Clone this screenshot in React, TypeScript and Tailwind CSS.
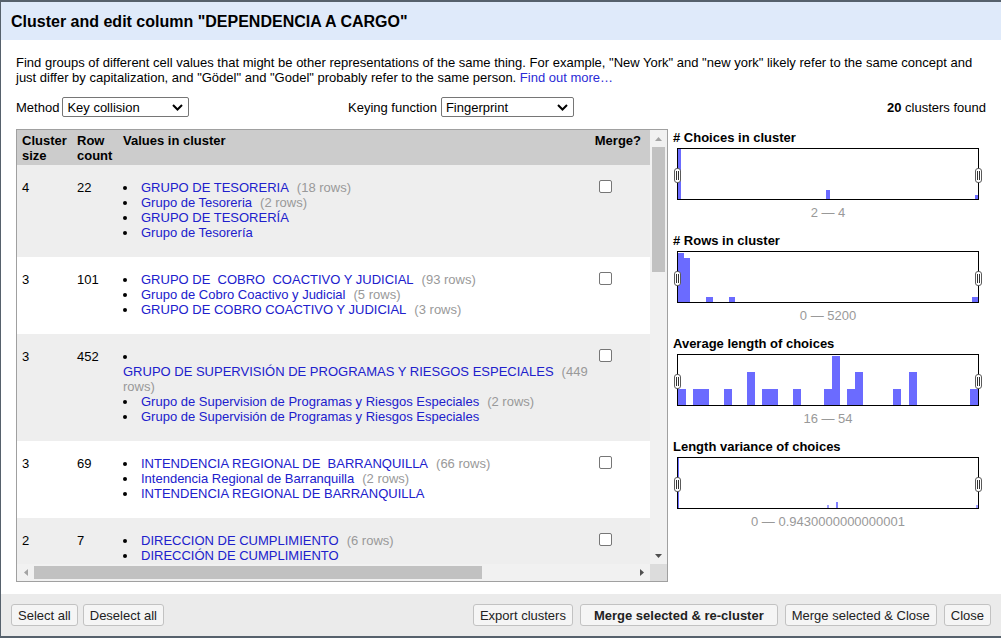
import React from "react";

type Value = { text: string; rows?: string };
type Cluster = { size: number; count: number; values: Value[]; wrapFirst?: boolean };

const clusters: Cluster[] = [
	{
		size: 4,
		count: 22,
		values: [
			{ text: "GRUPO DE TESORERIA", rows: "18" },
			{ text: "Grupo de Tesoreria", rows: "2" },
			{ text: "GRUPO DE TESORERÍA" },
			{ text: "Grupo de Tesorería" },
		],
	},
	{
		size: 3,
		count: 101,
		values: [
			{ text: "GRUPO DE  COBRO  COACTIVO Y JUDICIAL", rows: "93" },
			{ text: "Grupo de Cobro Coactivo y Judicial", rows: "5" },
			{ text: "GRUPO DE COBRO COACTIVO Y JUDICIAL", rows: "3" },
		],
	},
	{
		size: 3,
		count: 452,
		wrapFirst: true,
		values: [
			{ text: "GRUPO DE SUPERVISIÓN DE PROGRAMAS Y RIESGOS ESPECIALES", rows: "449" },
			{ text: "Grupo de Supervision de Programas y Riesgos Especiales", rows: "2" },
			{ text: "Grupo de Supervisión de Programas y Riesgos Especiales" },
		],
	},
	{
		size: 3,
		count: 69,
		values: [
			{ text: "INTENDENCIA REGIONAL DE  BARRANQUILLA", rows: "66" },
			{ text: "Intendencia Regional de Barranquilla", rows: "2" },
			{ text: "INTENDENCIA REGIONAL DE BARRANQUILLA" },
		],
	},
	{
		size: 2,
		count: 7,
		values: [
			{ text: "DIRECCION DE CUMPLIMIENTO", rows: "6" },
			{ text: "DIRECCIÓN DE CUMPLIMIENTO" },
		],
	},
];

type Bar = [number, number, number, number, string?];

const charts: { title: string; range: string; bars: Bar[] }[] = [
	{
		title: "# Choices in cluster",
		range: "2 — 4",
		bars: [
			[0, 0, 3, 50],
			[148, 41, 4, 9],
			[297, 46, 3, 4],
		],
	},
	{
		title: "# Rows in cluster",
		range: "0 — 5200",
		bars: [
			[0, 1, 6, 49],
			[6, 6, 6, 44],
			[28, 45, 7, 5],
			[51, 45, 6, 5],
			[294, 45, 6, 5],
		],
	},
	{
		title: "Average length of choices",
		range: "16 — 54",
		bars: [
			[0, 34, 8, 16],
			[15, 34, 16, 16],
			[46, 34, 8, 16],
			[69, 17, 8, 33],
			[84, 34, 16, 16],
			[115, 34, 8, 16],
			[146, 34, 8, 16],
			[154, 1, 8, 49],
			[169, 34, 8, 16],
			[177, 17, 8, 33],
			[215, 34, 8, 16],
			[231, 17, 8, 33],
			[292, 34, 8, 16],
		],
	},
	{
		title: "Length variance of choices",
		range: "0 — 0.9430000000000001",
		bars: [
			[0, 0, 1, 50],
			[149, 47, 2, 3, "#9d9dff"],
			[158, 44, 2, 6, "#8080ff"],
			[298, 47, 2, 3, "#9d9dff"],
		],
	},
];

function Chevron() {
	return (
		<svg width="11" height="7" viewBox="0 0 11 7" aria-hidden="true">
			<path d="M1 1 L5.5 5.5 L10 1" fill="none" stroke="#000" strokeWidth="2" />
		</svg>
	);
}

function FakeSelect({ label, width }: { label: string; width: string }) {
	return (
		<div
			className={`flex h-[20px] items-center justify-between rounded-[2px] border border-[#767676] bg-white pl-[4px] pr-[5px] ${width}`}
		>
			<span>{label}</span>
			<Chevron />
		</div>
	);
}

function Handle({ side }: { side: "left" | "right" }) {
	return (
		<div
			className={`absolute top-[19px] flex h-[15px] w-[7px] items-center justify-center gap-[1px] rounded-[3px] border border-[#5a5a5a] bg-white ${
				side === "left" ? "left-[-4px]" : "right-[-4px]"
			}`}
		>
			<div className="h-[9px] w-px bg-[#333]" />
			<div className="h-[9px] w-px bg-[#333]" />
		</div>
	);
}

function Chart({ title, range, bars }: { title: string; range: string; bars: Bar[] }) {
	return (
		<div className="flex flex-col pb-[12px]">
			<div className="h-[15px] pt-px font-bold leading-[15px]">{title}</div>
			<div className="relative ml-[4px] mt-[4px] h-[52px] w-[302px] border border-black bg-white">
				<svg width="300" height="50" viewBox="0 0 300 50" className="block">
					{bars.map(([x, y, w, h, c], i) => (
						<rect key={i} x={x} y={y} width={w} height={h} fill={c ?? "#6b6bff"} />
					))}
				</svg>
				<Handle side="left" />
				<Handle side="right" />
			</div>
			<div className="ml-[4px] mt-[5px] w-[302px] text-center leading-[15px] text-[#999]">{range}</div>
		</div>
	);
}

function Checkbox() {
	return <div className="h-[13px] w-[13px] rounded-[2px] border border-[#767676] bg-white" />;
}

function Dot() {
	return (
		<span className="flex h-[15px] w-[18px] shrink-0 items-center">
			<span className="h-[4px] w-[4px] rounded-full bg-black" />
		</span>
	);
}

function ValueItem({ v }: { v: Value }) {
	return (
		<div className="flex leading-[15px]">
			<Dot />
			<span className="whitespace-pre text-[#2020cc]">{v.text}</span>
			{v.rows && <span className="ml-[8px] text-[#999]">({v.rows} rows)</span>}
		</div>
	);
}

function ClusterRow({ c, odd }: { c: Cluster; odd: boolean }) {
	const [first, ...rest] = c.values;
	return (
		<div
			className={`grid grid-cols-[55px_45px_473px_60px] pb-[17px] pt-[15px] leading-[15px] ${
				odd ? "bg-[#eeeeee]" : "bg-white"
			}`}
		>
			<div className="pl-[5px]">{c.size}</div>
			<div className="pl-[5px]">{c.count}</div>
			<div className="pl-[6px]">
				{c.wrapFirst ? (
					<>
						<Dot />
						<div className="leading-[15px]">
							<span className="text-[#2020cc]">{first.text}</span>
							<span className="ml-[8px] text-[#999]">
								({first.rows}
								<br />
								rows)
							</span>
						</div>
					</>
				) : (
					<ValueItem v={first} />
				)}
				{rest.map((v, i) => (
					<ValueItem key={i} v={v} />
				))}
			</div>
			<div className="pl-[9px]">
				<Checkbox />
			</div>
		</div>
	);
}

function Arrow({ dir, color }: { dir: "up" | "down" | "left" | "right"; color: string }) {
	const d = {
		up: "M0 4 L3.5 0 L7 4 Z",
		down: "M0 0 L7 0 L3.5 4 Z",
		left: "M4 0 L4 7 L0 3.5 Z",
		right: "M0 0 L4 3.5 L0 7 Z",
	}[dir];
	const vertical = dir === "up" || dir === "down";
	return (
		<svg width={vertical ? 7 : 4} height={vertical ? 4 : 7} viewBox={vertical ? "0 0 7 4" : "0 0 4 7"}>
			<path d={d} fill={color} />
		</svg>
	);
}

function ClusterTable() {
	return (
		<div className="flex h-[453px] w-[652px] flex-col border border-[#a0a0a0]">
			<div className="flex h-[434px]">
				<div className="h-[434px] w-[633px] overflow-hidden">
					<div className="grid h-[35px] grid-cols-[55px_45px_473px_60px] bg-[#cccccc] pt-[3px] font-bold leading-[15px]">
						<div className="pl-[5px]">
							Cluster
							<br />
							size
						</div>
						<div className="pl-[5px]">
							Row
							<br />
							count
						</div>
						<div className="pl-[6px]">Values in cluster</div>
						<div className="pr-[9px] text-right">Merge?</div>
					</div>
					{clusters.map((c, i) => (
						<ClusterRow key={i} c={c} odd={i % 2 === 0} />
					))}
				</div>
				<div className="flex w-[17px] flex-col bg-[#f1f1f1]">
					<div className="flex h-[17px] items-center justify-center">
						<Arrow dir="up" color="#a3a3a3" />
					</div>
					<div className="mx-[2px] h-[125px] bg-[#c1c1c1]" />
					<div className="flex-1" />
					<div className="flex h-[17px] items-center justify-center">
						<Arrow dir="down" color="#505050" />
					</div>
				</div>
			</div>
			<div className="flex h-[17px]">
				<div className="flex w-[633px] items-center bg-[#f1f1f1]">
					<div className="flex w-[17px] items-center justify-center">
						<Arrow dir="left" color="#a3a3a3" />
					</div>
					<div className="h-[13px] w-[448px] bg-[#c1c1c1]" />
					<div className="flex-1" />
					<div className="flex w-[17px] items-center justify-center">
						<Arrow dir="right" color="#505050" />
					</div>
				</div>
				<div className="w-[17px] bg-[#dcdcdc]" />
			</div>
		</div>
	);
}

function Button({ children, bold }: { children: React.ReactNode; bold?: boolean }) {
	return (
		<div
			className={`flex h-[22px] items-center rounded-[3px] border border-[#c2c2c2] bg-[#f5f5f5] text-[#222] ${
				bold ? "px-[13px] font-bold" : "px-[6px]"
			}`}
		>
			{children}
		</div>
	);
}

export default function App() {
	return (
		<div className="flex h-[638px] w-[1001px] flex-col overflow-hidden border-b-2 border-l border-t-2 border-[#56616c] bg-white font-['Liberation_Sans',Arial,sans-serif] text-[13px] leading-[15px] text-black">
			<div className="flex h-[38px] items-center bg-[#dfeafa] pl-[10px] text-[16px] font-bold">
				Cluster and edit column "DEPENDENCIA A CARGO"
			</div>

			<div className="flex flex-1 flex-col pl-[15px] pr-[15px] pt-[15px]">
				<p>
					Find groups of different cell values that might be other representations of the same thing. For example,
					"New York" and "new york" likely refer to the same concept and just differ by capitalization, and "Gödel"
					and "Godel" probably refer to the same person. <span className="text-[#2b2bd6]">Find out more…</span>
				</p>

				<div className="mt-[12px] flex h-[20px] items-center">
					<div className="flex w-[332px] items-center gap-[3px]">
						<span>Method</span>
						<FakeSelect label="Key collision" width="w-[127px]" />
					</div>
					<div className="flex items-center gap-[4px]">
						<span>Keying function</span>
						<FakeSelect label="Fingerprint" width="w-[133px]" />
					</div>
					<div className="ml-auto">
						<span className="font-bold">20</span> clusters found
					</div>
				</div>

				<div className="mt-[12px] flex">
					<ClusterTable />
					<div className="ml-[5px] flex flex-col">
						{charts.map((ch) => (
							<Chart key={ch.title} {...ch} />
						))}
					</div>
				</div>
			</div>

			<div className="flex h-[42px] items-start bg-[#ebebeb] pl-[10px] pr-[10px] pt-[10px]">
				<div className="flex gap-[5px]">
					<Button>Select all</Button>
					<Button>Deselect all</Button>
				</div>
				<div className="ml-auto flex gap-[7px]">
					<Button>Export clusters</Button>
					<Button bold>Merge selected &amp; re-cluster</Button>
					<Button>Merge selected &amp; Close</Button>
					<Button>Close</Button>
				</div>
			</div>
		</div>
	);
}
